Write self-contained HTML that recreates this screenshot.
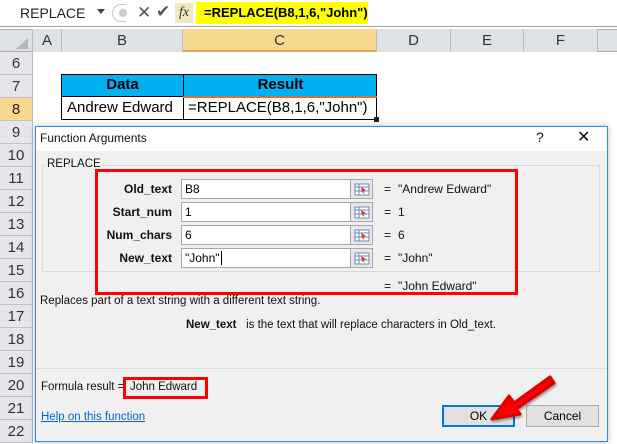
<!DOCTYPE html>
<html><head><style>
*{margin:0;padding:0;box-sizing:border-box}
body{width:617px;height:444px;position:relative;overflow:hidden;background:#fff;font-family:"Liberation Sans",sans-serif}
.a{position:absolute}
.hd{position:absolute;top:29px;height:23px;background:#dee1e6;border-right:1px solid #b8bcc2;font-size:15px;color:#333;text-align:center;line-height:23px}
.rn{position:absolute;left:0;width:33px;height:23px;background:#e4e6ea;border-bottom:1px solid #c0c4ca;border-right:1px solid #b8bcc2;font-size:15px;color:#333;text-align:center;line-height:23px}
.lab{position:absolute;right:445px;font-size:12px;font-weight:bold;color:#111;text-align:right}
.inp{position:absolute;left:181px;width:170px;height:20px;background:#fff;border:1px solid #a8a8a8;font-size:12px;padding-left:3px;line-height:18px}
.rb{position:absolute;left:350px;width:23px;height:20px;background:#e8e8e8;border:1px solid #a8a8a8}
.eq{position:absolute;left:384px;font-size:12px;color:#111}
.val{position:absolute;left:398px;font-size:12px;color:#111}
.t{font-size:11.5px;color:#111;position:absolute}
</style></head><body>
<div class="a" style="left:0;top:0;width:617px;height:27px;background:#fff;border-bottom:1px solid #a0a0a0"></div>
<div class="a" style="left:20px;top:5px;font-size:14px;color:#222">REPLACE</div>
<div class="a" style="left:97px;top:9px;border-left:4px solid transparent;border-right:4px solid transparent;border-top:5px solid #444"></div>
<div class="a" style="left:112px;top:4px;width:14px;height:18px;border:1px solid #c8c8c8;border-radius:9px 0 0 9px;border-right:none"></div>
<div class="a" style="left:119px;top:9px;width:8px;height:8px;border-radius:4px;background:#ccc"></div>
<div class="a" style="left:137px;top:3px;font-size:17px;color:#555">✕</div>
<div class="a" style="left:156px;top:2px;font-size:17px;color:#555">✔</div>
<div class="a" style="left:175px;top:3px;width:18px;height:20px;background:#f1e7c0;font-family:'Liberation Serif',serif;font-style:italic;font-size:14px;text-align:center;line-height:20px;color:#333">fx</div>
<div class="a" style="left:196px;top:2px;width:172px;height:22px;background:#ffff00;font-size:13px;font-weight:bold;line-height:22px;padding-left:8px;white-space:nowrap">=REPLACE(B8,1,6,"John")</div>
<div class="a" style="left:0;top:29px;width:617px;height:23px;background:#dee1e6;border-bottom:1px solid #a8acb2;border-top:1px solid #b0b0b0"></div>
<div class="a" style="left:0;top:29px;width:33px;height:23px;border-right:1px solid #b8bcc2"></div>
<div class="a" style="left:16px;top:38px;border-left:12px solid transparent;border-bottom:11px solid #b6b9be"></div>
<div class="hd" style="left:33px;width:29px">A</div>
<div class="hd" style="left:62px;width:121px">B</div>
<div class="hd" style="left:183px;width:194px;background:#f8d990;border-bottom:2px solid #e1a94f">C</div>
<div class="hd" style="left:377px;width:74px">D</div>
<div class="hd" style="left:451px;width:73px">E</div>
<div class="hd" style="left:524px;width:74px">F</div>
<div class="rn" style="top:52px">6</div>
<div class="rn" style="top:75px">7</div>
<div class="rn" style="top:98px;background:#f8d990;color:#222">8</div>
<div class="rn" style="top:121px">9</div>
<div class="rn" style="top:144px">10</div>
<div class="rn" style="top:167px">11</div>
<div class="rn" style="top:190px">12</div>
<div class="rn" style="top:213px">13</div>
<div class="rn" style="top:236px">14</div>
<div class="rn" style="top:259px">15</div>
<div class="rn" style="top:282px">16</div>
<div class="rn" style="top:305px">17</div>
<div class="rn" style="top:328px">18</div>
<div class="rn" style="top:351px">19</div>
<div class="rn" style="top:374px">20</div>
<div class="rn" style="top:397px">21</div>
<div class="rn" style="top:420px">22</div>
<div class="a" style="left:61px;top:74px;width:316px;height:23px;background:#00b0f0;border:1px solid #000"></div>
<div class="a" style="left:183px;top:74px;width:1px;height:46px;background:#000"></div>
<div class="a" style="left:61px;top:96px;width:316px;height:24px;border:1px solid #000;border-top:none"></div>
<div class="a" style="left:62px;top:76px;width:121px;text-align:center;font-size:15px;font-weight:bold">Data</div>
<div class="a" style="left:184px;top:76px;width:193px;text-align:center;font-size:15px;font-weight:bold">Result</div>
<div class="a" style="left:183px;top:96px;width:194px;height:2px;background:#e86a2a"></div>
<div class="a" style="left:67px;top:99px;font-size:15px">Andrew Edward</div>
<div class="a" style="left:188px;top:99px;font-size:15px">=REPLACE(B8,1,6,"John")</div>
<div class="a" style="left:374px;top:117px;width:5px;height:5px;background:#222"></div>
<div class="a" style="left:35px;top:126px;width:573px;height:316px;background:#f0f0f0;border:1px solid #2a8fe0;box-shadow:0 0 6px rgba(0,0,0,.25)"></div>
<div class="a" style="left:36px;top:127px;width:571px;height:24px;background:#fff"></div>
<div class="a" style="left:40px;top:131px;font-size:12px;color:#111">Function Arguments</div>
<div class="a" style="left:536px;top:129px;font-size:14px;color:#111">?</div>
<div class="a" style="left:577px;top:127px;font-size:16px;color:#111">✕</div>
<div class="a" style="left:42px;top:165px;width:558px;height:107px;border:1px solid #d8d8d8"></div>
<div class="a" style="left:45px;top:158px;background:#f0f0f0;padding:0 2px;font-size:11.5px;color:#111">REPLACE</div>
<div class="lab" style="top:182px">Old_text</div>
<div class="lab" style="top:205px">Start_num</div>
<div class="lab" style="top:228px">Num_chars</div>
<div class="lab" style="top:251px">New_text</div>
<div class="inp" style="top:179px">B8</div>
<div class="inp" style="top:202px">1</div>
<div class="inp" style="top:225px">6</div>
<div class="inp" style="top:248px">"John"<span style="border-left:1px solid #000;margin-left:1px"></span></div>
<div class="rb" style="top:179px"></div><div class="rb" style="top:202px"></div><div class="rb" style="top:225px"></div><div class="rb" style="top:248px"></div>
<svg class="a" style="left:354px;top:183px" width="16" height="90"><g id="ic"><rect x="1" y="1" width="14" height="11" fill="#fff" stroke="#6a8ab8"/><line x1="1" y1="4" x2="15" y2="4" stroke="#6a8ab8"/><line x1="1" y1="8" x2="15" y2="8" stroke="#6a8ab8"/><line x1="5" y1="1" x2="5" y2="12" stroke="#6a8ab8"/><path d="M7 4 L12 7 L9 8 L11 11 L8 9 Z" fill="#d83020"/></g><use href="#ic" y="23"/><use href="#ic" y="46"/><use href="#ic" y="69"/></svg>
<div class="eq" style="top:182px">=</div><div class="val" style="top:182px">"Andrew Edward"</div>
<div class="eq" style="top:205px">=</div><div class="val" style="top:205px">1</div>
<div class="eq" style="top:228px">=</div><div class="val" style="top:228px">6</div>
<div class="eq" style="top:251px">=</div><div class="val" style="top:251px">"John"</div>
<div class="eq" style="top:279px">=</div><div class="val" style="top:279px">"John Edward"</div>
<div class="a" style="left:95px;top:169px;width:423px;height:126px;border:3px solid #ff0000"></div>
<div class="t" style="left:40px;top:295px">Replaces part of a text string with a different text string.</div>
<div class="t" style="left:186px;top:319px"><b>New_text</b>&nbsp;&nbsp; is the text that will replace characters in Old_text.</div>
<div class="a" style="left:36px;top:368px;width:571px;height:1px;background:#dcdcdc"></div>
<div class="t" style="left:41px;top:381px">Formula result =</div>
<div class="a" style="left:123px;top:377px;width:85px;height:22px;border:3px solid #ff0000"></div>
<div class="t" style="left:130px;top:381px">John Edward</div>
<div class="t" style="left:41px;top:411px;color:#0066cc;text-decoration:underline">Help on this function</div>
<div class="a" style="left:442px;top:405px;width:73px;height:22px;border:2px solid #0078d7;background:#e1e1e1;font-size:12px;text-align:center;line-height:18px">OK</div>
<div class="a" style="left:526px;top:405px;width:73px;height:22px;border:1px solid #adadad;background:#e1e1e1;font-size:12px;text-align:center;line-height:20px">Cancel</div>
<svg class="a" style="left:480px;top:365px" width="80" height="65"><path d="M70 12 L34 38 L29 31 L12 54 L40 49 L36 44 L74 18 Z" fill="#ff0000" stroke="#e00000" stroke-width="3" stroke-linejoin="round" style="filter:drop-shadow(1px 2px 1px rgba(0,0,0,.35))"/></svg>
</body></html>
